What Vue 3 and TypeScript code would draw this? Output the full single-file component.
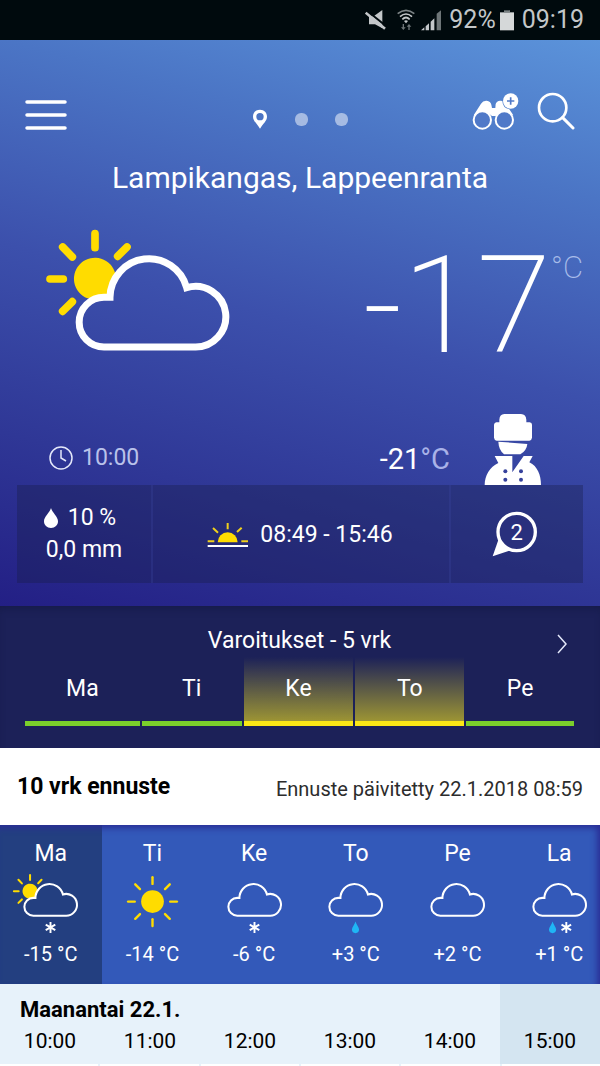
<script setup lang="ts">
type Level = 'green' | 'yellow'
type Sky = 'sun' | 'cloud' | 'suncloud'

interface Warning {
  day: string
  level: Level
}

interface DayForecast {
  day: string
  temp: string
  sky: Sky
  drop: number | null
  snow: number | null
}

const warnings: Warning[] = [
  { day: 'Ma', level: 'green' },
  { day: 'Ti', level: 'green' },
  { day: 'Ke', level: 'yellow' },
  { day: 'To', level: 'yellow' },
  { day: 'Pe', level: 'green' },
]

const days: DayForecast[] = [
  { day: 'Ma', temp: '-15 °C', sky: 'suncloud', drop: null, snow: 366 },
  { day: 'Ti', temp: '-14 °C', sky: 'sun', drop: null, snow: null },
  { day: 'Ke', temp: '-6 °C', sky: 'cloud', drop: null, snow: 366 },
  { day: 'To', temp: '+3 °C', sky: 'cloud', drop: 366, snow: null },
  { day: 'Pe', temp: '+2 °C', sky: 'cloud', drop: null, snow: null },
  { day: 'La', temp: '+1 °C', sky: 'cloud', drop: 308, snow: 423 },
]

const hours: string[] = ['10:00', '11:00', '12:00', '13:00', '14:00', '15:00']

const cloudPath =
  'M240 233 A117 117 0 0 1 470 204 A91 91 0 1 1 493 382 H222 A74.500 74.500 0 0 1 222 233 Z'
const sunBehindCloud =
  'M256 162 A63 63 0 1 0 172 236 L218 233 L240 233 Q242 195 256 162 Z'
const sunRays =
  'M195 42 V84 M60 178 H100 M98 82 L127 112 M291 82 L263 110 M127 246 L98 275'
const rayAngles: number[] = [0, 45, 90, 135, 180, 225, 270, 315]
</script>

<template>
  <main class="page">
    <div class="status">
      <svg width="22" height="22" viewBox="0 0 66 66" aria-hidden="true">
        <path d="M12 22 H26 L52 3 V58 L30 46 H12 Z" fill="#c3c7c9" />
        <path d="M4 4 L64 52" stroke="#000a0d" stroke-width="6" />
        <path d="M2 11 L60 59" stroke="#c3c7c9" stroke-width="8" />
      </svg>
      <svg class="wifi" width="18" height="22" viewBox="0 0 54 66" aria-hidden="true">
        <g fill="none" stroke="#c3c7c9" stroke-width="5">
          <path d="M2 14 Q27 -6 52 14" stroke="#7c8486" />
          <path d="M9 23 Q27 7 45 23" />
          <path d="M16 31 Q27 20 38 31" />
        </g>
        <path d="M21 36 Q27 31 33 36 L27 43 Z" fill="#c3c7c9" />
        <path d="M17 45 V55 H12 L19 63 L26 55 H21 V45 Z M34 63 V53 H29 L36 45 L43 53 H38 V63 Z" fill="#6d7577" />
      </svg>
      <svg width="20" height="22" viewBox="0 0 60 66" aria-hidden="true">
        <path d="M0 64 L10 55 V64 Z M14 52 L24 43 V64 H14 Z M29 38 L40 28 V64 H29 Z" fill="#c3c7c9" />
        <path d="M47 14 L60 4 V64 H47 Z" fill="#6d7577" />
      </svg>
      <span class="charge">92%</span>
      <svg width="14" height="22" viewBox="0 0 42 66" aria-hidden="true">
        <path d="M0 10 H42 V64 H0 Z" fill="#d5d8d9" />
        <path d="M12 4 H30 V10 H12 Z" fill="#7c8486" />
      </svg>
      <span>09:19</span>
    </div>

    <section class="hero">
      <header class="toolbar">
        <button class="menu" type="button" aria-label="Valikko">
          <svg width="42" height="32" viewBox="0 0 42 32">
            <path d="M2 3 H40 M2 16 H40 M2 29 H40" stroke="#fff" stroke-width="3.500" stroke-linecap="round" />
          </svg>
        </button>
        <nav class="pager" aria-label="Paikat">
          <button type="button" aria-label="Nykyinen sijainti">
            <svg width="16" height="20" viewBox="0 0 48 60">
              <path fill="#fff" fill-rule="evenodd" d="M24 2 C11 2 3 11 3 23 C3 36 15 43 24 59 C33 43 45 36 45 23 C45 11 37 2 24 2 Z M24 12 A11 11 0 1 1 24 34 A11 11 0 1 1 24 12 Z" />
            </svg>
          </button>
          <button class="dot" type="button" aria-label="Paikka 2"></button>
          <button class="dot" type="button" aria-label="Paikka 3"></button>
        </nav>
        <div class="tools">
          <button type="button" aria-label="Lisää havainto">
            <svg width="48" height="38" viewBox="390 270 144 114">
              <path d="M398 340 L420 305 Q426 295 437 296 Q449 297 451 308 L453 318 H463 L464 306 Q467 297 477 296 L484 297 Q485 318 505 322 L517 340 L500 334 L463 342 H453 L440 332 Z" fill="#fff" />
              <g fill="#5079c8" stroke="#fff" stroke-width="6">
                <circle cx="424" cy="354" r="26" />
                <circle cx="490" cy="354" r="26" />
              </g>
              <circle cx="509" cy="297" r="23" fill="#fff" />
              <path d="M498 297 H520 M509 286 V308" stroke="#5079c8" stroke-width="5" />
            </svg>
          </button>
          <button type="button" aria-label="Haku">
            <svg width="38" height="38" viewBox="591 281 114 114">
              <g fill="none" stroke="#fff">
                <circle cx="638" cy="328" r="41" stroke-width="8" />
                <path d="M668 358 L699 389" stroke-width="9" stroke-linecap="round" />
              </g>
            </svg>
          </button>
        </div>
      </header>

      <h1>Lampikangas, Lappeenranta</h1>

      <div class="now">
        <svg width="185" height="124" viewBox="45 25 555 372" aria-hidden="true">
          <path :d="sunBehindCloud" fill="#ffdc00" />
          <path :d="sunRays" stroke="#ffdc00" stroke-width="23" stroke-linecap="round" />
          <path :d="cloudPath" fill="none" stroke="#fff" stroke-width="21" />
        </svg>
        <p class="temp">-17<span class="unit">°C</span></p>
      </div>

      <div class="details">
        <p class="time">
          <svg width="26" height="26" viewBox="0 0 26 26" aria-hidden="true">
            <g fill="none" stroke="#e4e8fa" stroke-width="1.500">
              <circle cx="13" cy="13" r="11" />
              <path d="M13 5 V13 L18 16" />
            </g>
          </svg>
          <span>10:00</span>
        </p>
        <p class="feels">-21<span>°C</span></p>
        <svg class="person" width="58" height="72" viewBox="551 38 174 216" aria-hidden="true">
          <g fill="#fff">
            <path d="M597 66 V58 Q598 42 612 41 H662 Q677 42 678 58 V66 H688 Q695 67 695 73 V112 Q694 120 687 121 H589 Q582 120 581 112 V73 Q582 67 588 66 Z" />
            <path d="M594 124 L681 131 Q679 151 660 162 H611 Q595 148 594 124 Z" />
            <path d="M583 167 H636 V216 L670 167 H697 L687 186 C712 198 722 225 722 254 H553 C553 227 568 199 594 188 Z" />
          </g>
          <g fill="#35419b">
            <circle cx="615" cy="213" r="6" />
            <circle cx="662" cy="213" r="6" />
            <circle cx="615" cy="238" r="6" />
            <circle cx="662" cy="238" r="6" />
          </g>
        </svg>
      </div>

      <div class="panel">
        <div class="rain">
          <p class="chance">
            <svg width="14" height="20" viewBox="0 0 42 60" aria-hidden="true">
              <path d="M21 0 C25 14 42 26 42 40 C42 52 33 60 21 60 C9 60 0 52 0 40 C0 26 17 14 21 0 Z" fill="#fff" />
            </svg>
            <span>10 %</span>
          </p>
          <p>0,0 mm</p>
        </div>
        <div class="daylight">
          <svg width="42" height="26" viewBox="618 261 126 78" aria-hidden="true">
            <path d="M650 322 A30 30 0 0 1 710 322 Z" fill="#ffdc00" />
            <path d="M680 264 V283 M636 279 L651 293 M722 278 L708 291 M620 319 H640 M721 319 H741" stroke="#f0d01c" stroke-width="6" />
            <path d="M620 333 H741" stroke="#fff" stroke-width="6" />
          </svg>
          <span>08:49 - 15:46</span>
        </div>
        <button class="comments" type="button" aria-label="Havainnot: 2">
          <svg width="46" height="46" viewBox="576 331 138 138">
            <path d="M597 412 L578 467 L632 449 Z" fill="#fff" />
            <circle cx="650" cy="394" r="56" fill="#29307d" stroke="#fff" stroke-width="10" />
            <text x="650" y="418" text-anchor="middle" font-size="66" fill="#fff">2</text>
          </svg>
        </button>
      </div>
    </section>

    <section class="warnings">
      <a class="warnings-link" href="#varoitukset">
        <h2>Varoitukset - 5 vrk</h2>
        <svg width="10" height="20" viewBox="0 0 10 20" aria-hidden="true">
          <path d="M1 1 L9 10 L1 19" fill="none" stroke="#e4e8fa" stroke-width="1.500" />
        </svg>
      </a>
      <ul class="warning-days">
        <li v-for="w in warnings" :key="w.day" :class="w.level">{{ w.day }}</li>
      </ul>
    </section>

    <header class="forecast-head">
      <h2>10 vrk ennuste</h2>
      <p>Ennuste päivitetty 22.1.2018 08:59</p>
    </header>

    <section class="days">
      <div class="day-row">
        <button v-for="(d, i) in days" :key="d.day" type="button" class="day" :class="{ active: i === 0 }">
          <span>{{ d.day }}</span>
          <svg width="77" height="67" viewBox="45 0 642 560" aria-hidden="true">
            <template v-if="d.sky === 'sun'">
              <circle cx="366" cy="264" r="95" fill="#ffdc00" />
              <path
                v-for="a in rayAngles"
                :key="a"
                d="M366 60 V116"
                :transform="`rotate(${a} 366 264)`"
                stroke="#ffdc00"
                stroke-width="20"
                stroke-linecap="round"
              />
            </template>
            <template v-if="d.sky === 'suncloud'">
              <path :d="sunBehindCloud" fill="#ffdc00" />
              <path :d="sunRays" stroke="#ffdc00" stroke-width="17" stroke-linecap="round" />
            </template>
            <path v-if="d.sky !== 'sun'" :d="cloudPath" fill="none" stroke="#fff" stroke-width="17" />
            <path
              v-if="d.drop !== null"
              d="M0 -50 C5 -26 30 -4 30 18 C30 37 17 48 0 48 C-17 48 -30 37 -30 18 C-30 -4 -5 -26 0 -50 Z"
              :transform="`translate(${d.drop} 480)`"
              fill="#1fb6f5"
            />
            <path
              v-if="d.snow !== null"
              d="M0 -46 V46 M-40 -23 L40 23 M-40 23 L40 -23"
              :transform="`translate(${d.snow} 480)`"
              stroke="#fff"
              stroke-width="16"
            />
          </svg>
          <span class="day-temp">{{ d.temp }}</span>
        </button>
      </div>
    </section>

    <section class="hours">
      <h3>Maanantai 22.1.</h3>
      <ol>
        <li v-for="h in hours" :key="h">{{ h }}</li>
      </ol>
    </section>
    <div class="cells">
      <i v-for="h in hours" :key="h"></i>
    </div>
  </main>
</template>

<style>
body {
  background: #fff;
}
</style>

<style scoped>
.page {
  min-height: 100vh;
  display: flex;
  flex-direction: column;
  overflow: hidden;
  font-family: Roboto, "Liberation Sans", sans-serif;
  font-size: 23px;
  line-height: 32px;
  color: #fff;
}
h1, h2, h3, p, ul, ol {
  margin: 0;
  padding: 0;
  list-style: none;
  font-weight: 400;
}
svg {
  display: block;
  flex: none;
}
button {
  font: inherit;
  color: inherit;
  background: none;
  border: 0;
  padding: 0;
}
.status {
  height: 40px;
  background: #000a0d;
  color: #c3c7c9;
  display: flex;
  align-items: center;
  justify-content: flex-end;
  gap: 8px;
  padding-right: 16px;
  font-size: 25px;
}
.status .wifi {
  margin: 0 -2px 0 2px;
}
.charge {
  margin-right: -4px;
}
.hero {
  background: linear-gradient(195deg, #5b93da 0%, #4b75c5 22%, #3c50ac 50%, #2f3796 76%, #231f85 100%);
  display: flex;
  flex-direction: column;
  padding: 50px 17px 23px;
}
.toolbar {
  display: grid;
  grid-template-columns: 1fr auto 1fr;
  align-items: center;
  height: 46px;
  padding: 0 8px;
}
.menu {
  justify-self: start;
  padding-top: 4px;
}
.pager {
  display: flex;
  align-items: center;
  gap: 27px;
  padding-top: 12px;
}
.dot {
  width: 13px;
  height: 13px;
  border-radius: 6px;
  background: rgba(255, 255, 255, 0.5);
}
.tools {
  justify-self: end;
  display: flex;
  gap: 18px;
  padding-bottom: 4px;
}
h1 {
  text-align: center;
  font-size: 30px;
  line-height: 40px;
  margin-top: 22px;
}
.now {
  display: flex;
  justify-content: space-between;
  align-items: flex-start;
  margin-top: 30px;
  padding-left: 28px;
}
.temp {
  display: flex;
  font-size: 135px;
  line-height: 156px;
  font-weight: 200;
}
.unit {
  font-size: 31px;
  line-height: 80px;
  color: #a9bdea;
}
.details {
  display: flex;
  align-items: flex-end;
  height: 72px;
  margin-top: 29px;
  padding: 0 41px 0 31px;
}
.time {
  display: flex;
  align-items: center;
  gap: 8px;
  padding-bottom: 11px;
  color: #b9c2ea;
}
.feels {
  margin-left: auto;
  font-size: 29px;
  padding-bottom: 10px;
}
.feels span {
  color: #a9b2e8;
}
.person {
  margin-left: 34px;
}
.panel {
  display: grid;
  grid-template-columns: 9fr 20fr 9fr;
  height: 98px;
  background: rgba(22, 28, 70, 0.35);
}
.panel > * {
  display: flex;
  align-items: center;
  justify-content: center;
}
.panel > * + * {
  border-left: 2px solid rgba(60, 70, 160, 0.3);
}
.panel .rain {
  flex-direction: column;
}
.rain p {
  display: flex;
  align-items: center;
}
.rain .chance {
  gap: 10px;
  padding-right: 8px;
}
.daylight {
  gap: 11px;
  padding: 2px 2px 0 0;
}
.comments {
  padding-right: 4px;
}
.warnings {
  background: #1c2158;
  box-shadow: inset 0 6px 8px -4px #151a48;
  padding: 19px 26px 22px 25px;
}
.warnings-link {
  display: flex;
  align-items: center;
  color: inherit;
  text-decoration: none;
}
.warnings-link h2 {
  flex: 1;
  font-size: 23px;
  text-align: center;
}
.warnings-link svg {
  margin: 6px 7px 0 -17px;
}
.warning-days {
  display: grid;
  grid-template-columns: 115fr 100fr 110fr 109fr 108fr;
  gap: 2px;
  text-align: center;
}
.warning-days li {
  padding: 16px 0;
  border-bottom: 5px solid #7bcf2b;
}
.warning-days .yellow {
  border-bottom-color: #fbe716;
  background: linear-gradient(rgba(156, 148, 52, 0) 0%, #9c9434 100%);
  background-clip: padding-box;
}
.forecast-head {
  display: flex;
  align-items: center;
  justify-content: space-between;
  height: 77px;
  padding: 0 17px;
  color: #000;
}
.forecast-head h2 {
  font-size: 23px;
  font-weight: 700;
}
.forecast-head p {
  font-size: 20px;
  color: #2c2c2c;
  padding-top: 4px;
}
.days {
  background: #3359b9;
  overflow: hidden;
  position: relative;
}
.days::after {
  content: "";
  position: absolute;
  inset: 0;
  box-shadow: inset -4px 4px 6px -1px #2a2e96;
  pointer-events: none;
}
.day-row {
  display: grid;
  grid-template-columns: repeat(6, 1fr);
  margin-right: -10px;
}
.day {
  display: flex;
  flex-direction: column;
  align-items: center;
  padding: 13px 0;
}
.day.active {
  background: #233f80;
}
.day-temp {
  font-size: 20px;
  line-height: 34px;
}
.hours {
  background: linear-gradient(to right, #e7f2fa 83.3%, #d4e5f1 83.3%);
  color: #000;
  padding: 10px 0 8px;
}
.hours h3 {
  font-size: 22px;
  font-weight: 700;
  padding-left: 20px;
}
.hours ol {
  display: grid;
  grid-template-columns: repeat(6, 1fr);
  text-align: center;
  font-size: 21px;
  line-height: 30px;
}
.cells {
  flex: 1;
  min-height: 2px;
  display: grid;
  grid-template-columns: repeat(6, 1fr);
  gap: 2px;
  background: #e7f2fa;
}
.cells i {
  background: #fff;
}
</style>
